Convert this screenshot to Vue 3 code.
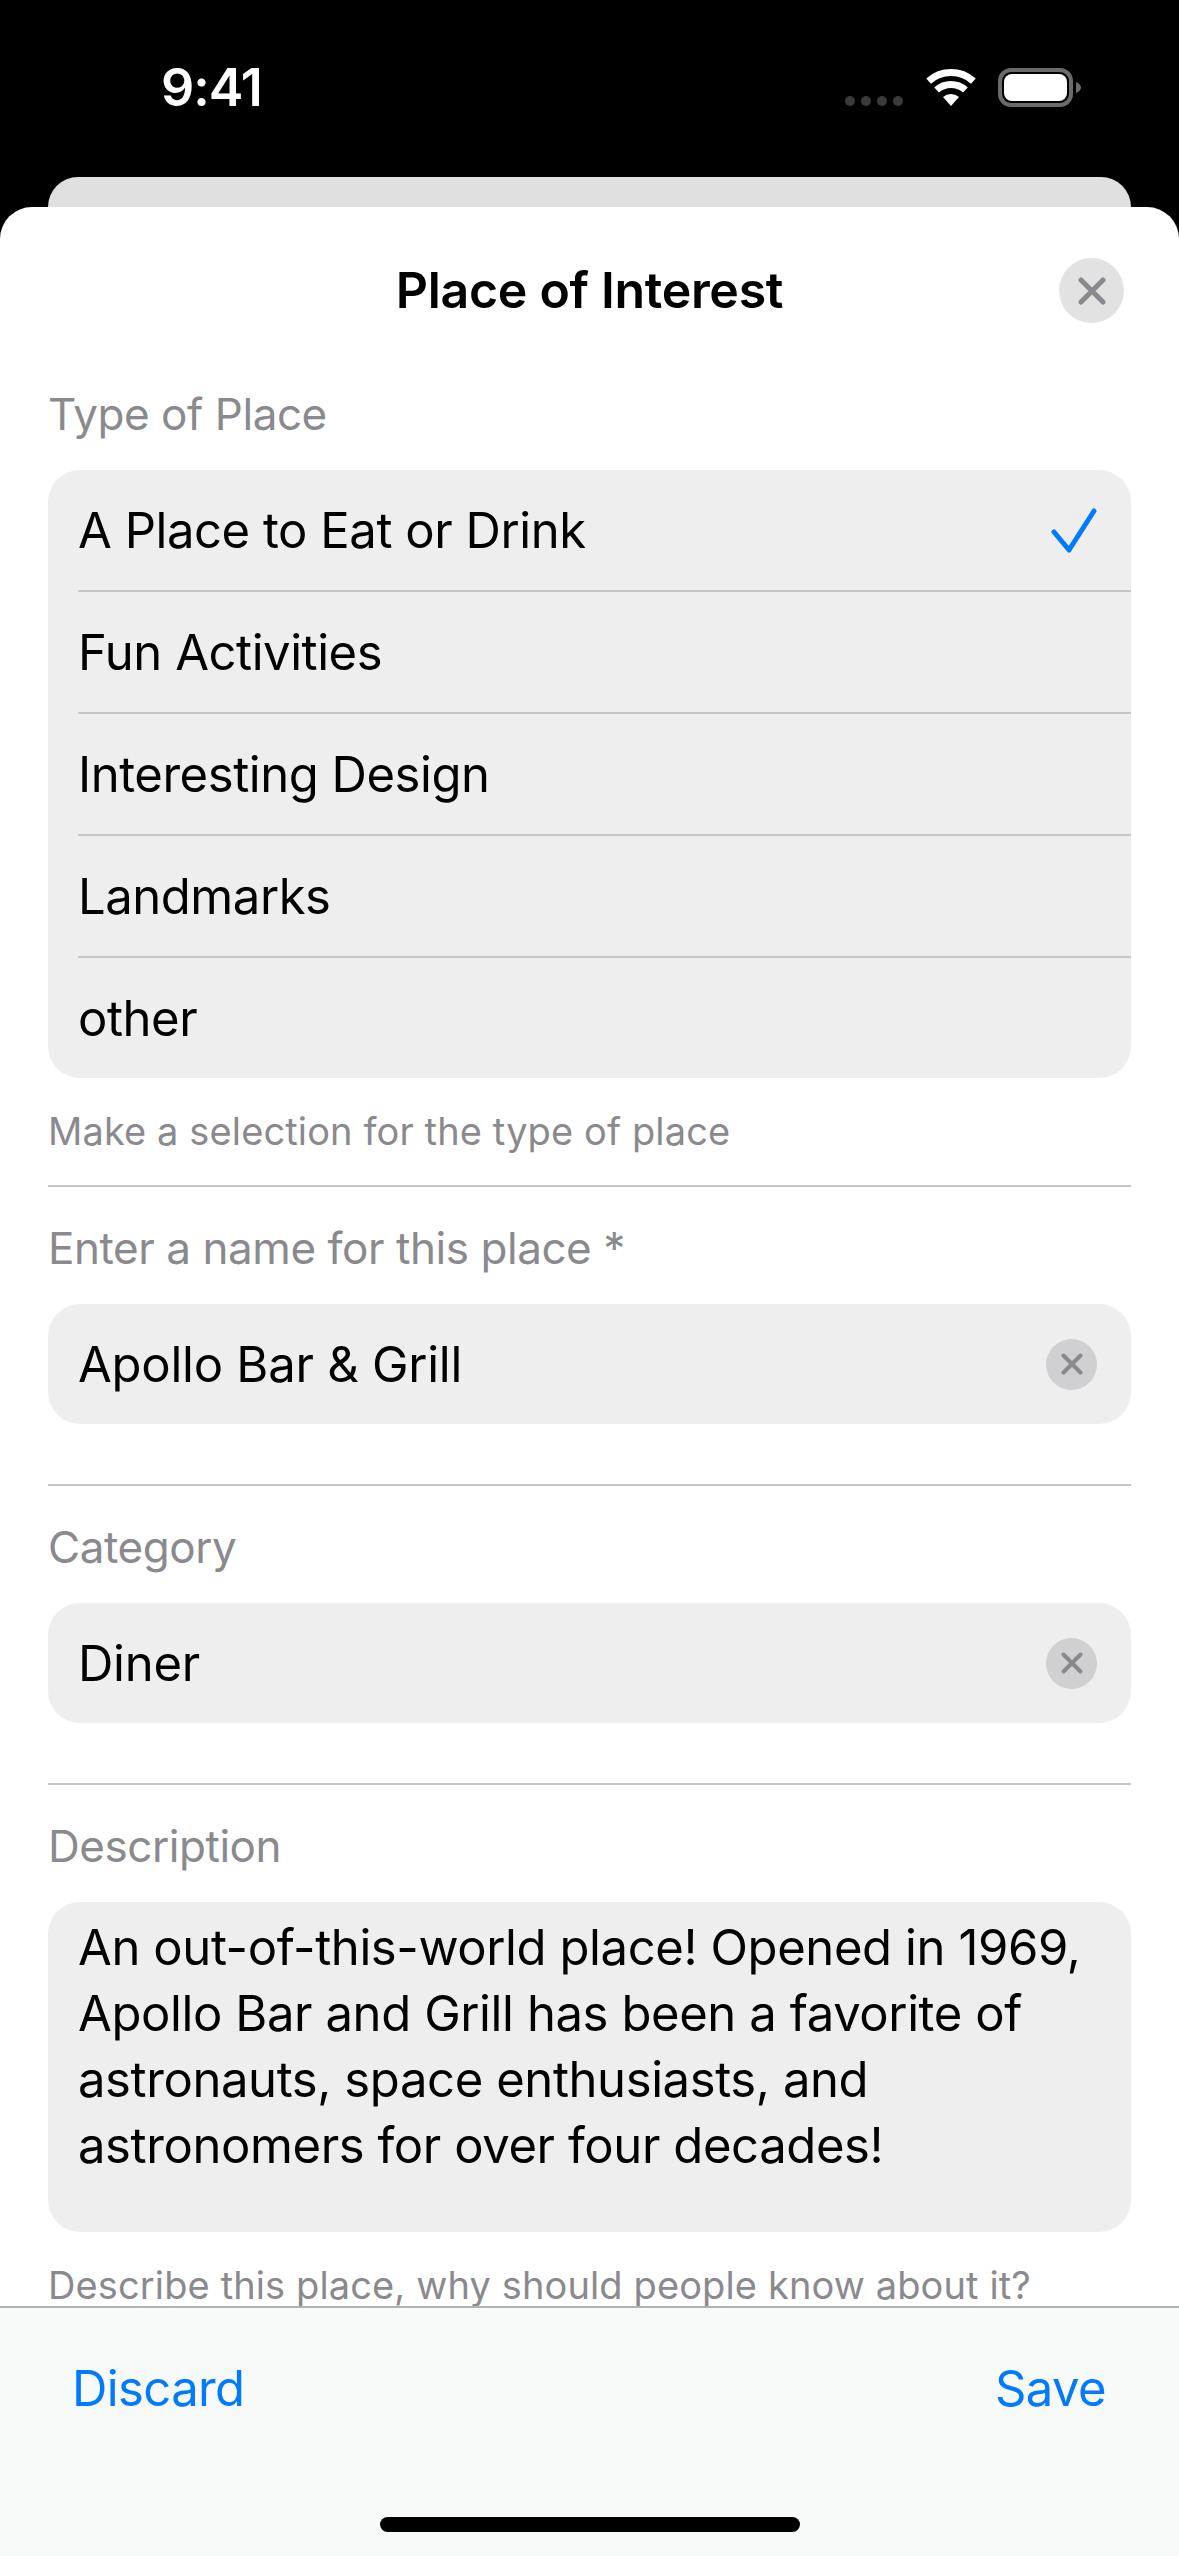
<script setup>
const placeTypes = [
  { id: 1, name: "A Place to Eat or Drink", selected: true },
  { id: 2, name: "Fun Activities" },
  { id: 3, name: "Interesting Design" },
  { id: 4, name: "Landmarks" },
  { id: 5, name: "other" },
];
</script>

<template>
  <div class="phone">
    <div class="status">
      <span class="time">9:41</span>
      <div class="status-icons">
        <div class="dots"><i></i><i></i><i></i><i></i></div>
        <svg class="wifi" width="50" height="37" viewBox="0 0 50 37">
          <path d="M2.6 12.1A33.5 33.5 0 0 1 47.4 12.1" fill="none" stroke="#fff" stroke-width="7" />
          <path d="M10.6 21A21.5 21.5 0 0 1 39.4 21" fill="none" stroke="#fff" stroke-width="7" />
          <path d="M25 37L17 28.1A12 12 0 0 1 33 28.1Z" fill="#fff" />
        </svg>
        <svg class="battery" width="83" height="39" viewBox="0 0 83 39">
          <rect x="2" y="2" width="71" height="35" rx="11" fill="none" stroke="#6b6b6b" stroke-width="4" />
          <rect x="6" y="6" width="63" height="27" rx="8" fill="#fff" />
          <path d="M78 14C81 15 83 17 83 19.5C83 22 81 24 78 25Z" fill="#6b6b6b" />
        </svg>
      </div>
    </div>
    <div class="peek"></div>

    <div class="sheet">
      <div class="header">
        <h1 class="title">Place of Interest</h1>
        <button class="close">
          <svg width="28" height="28" viewBox="0 0 28 28">
            <path d="M3 3L25 25M25 3L3 25" stroke="#8a8a8e" stroke-width="5" stroke-linecap="round" />
          </svg>
        </button>
      </div>

      <div class="content">
        <section class="section first">
          <div class="label">Type of Place</div>
          <div class="card">
            <div v-for="t in placeTypes" :key="t.id" class="row">
              <span>{{ t.name }}</span>
              <svg v-if="t.selected" class="check" width="46" height="48" viewBox="0 0 46 48">
                <path d="M3 26L18 44L43 5" fill="none" stroke="#007aff" stroke-width="5" stroke-linecap="round" stroke-linejoin="round" />
              </svg>
            </div>
          </div>
          <div class="hint">Make a selection for the type of place</div>
        </section>

        <section class="section">
          <div class="label">Enter a name for this place *</div>
          <div class="input">
            <span>Apollo Bar &amp; Grill</span>
            <button class="clear">
              <svg width="22" height="22" viewBox="0 0 22 22">
                <path d="M2.5 2.5L19.5 19.5M19.5 2.5L2.5 19.5" stroke="#89898d" stroke-width="4" stroke-linecap="round" />
              </svg>
            </button>
          </div>
        </section>

        <section class="section">
          <div class="label">Category</div>
          <div class="input">
            <span>Diner</span>
            <button class="clear">
              <svg width="22" height="22" viewBox="0 0 22 22">
                <path d="M2.5 2.5L19.5 19.5M19.5 2.5L2.5 19.5" stroke="#89898d" stroke-width="4" stroke-linecap="round" />
              </svg>
            </button>
          </div>
        </section>

        <section class="section">
          <div class="label">Description</div>
          <div class="textarea">
            An out-of-this-world place! Opened in 1969,<br />
            Apollo Bar and Grill has been a favorite of<br />
            astronauts, space enthusiasts, and<br />
            astronomers for over four decades!
          </div>
          <div class="hint">Describe this place, why should people know about it?</div>
        </section>
      </div>

      <div class="footer">
        <div class="actions">
          <span>Discard</span>
          <span>Save</span>
        </div>
        <div class="home"></div>
      </div>
    </div>
  </div>
</template>

<style>
html,
body {
  background: #000;
}
</style>

<style scoped>
.phone {
  width: 1179px;
  height: 2556px;
  background: #000;
  display: flex;
  flex-direction: column;
  overflow: hidden;
  font-family: Inter, "Liberation Sans", sans-serif;
  color: #000;
}
.status {
  height: 177px;
  flex: none;
  display: flex;
  justify-content: space-between;
  align-items: flex-start;
  padding: 0 98px 0 161px;
  box-sizing: border-box;
}
.time {
  color: #fff;
  font-size: 52px;
  font-weight: 600;
  line-height: 60px;
  margin-top: 58px;
  letter-spacing: -1px;
}
.status-icons {
  display: flex;
  align-items: flex-start;
  margin-top: 68px;
}
.dots {
  display: flex;
  gap: 6px;
  margin-top: 28px;
  margin-right: 23px;
}
.dots i {
  width: 10px;
  height: 10px;
  border-radius: 50%;
  background: #3a3a3a;
}
.wifi {
  margin-top: 1px;
  margin-right: 22px;
}
.peek {
  height: 30px;
  flex: none;
  margin: 0 48px;
  background: #e0e0e0;
  border-radius: 30px 30px 0 0;
}
.sheet {
  flex: 1;
  min-height: 0;
  background: #fff;
  border-radius: 32px 32px 0 0;
  display: flex;
  flex-direction: column;
}
.header {
  height: 166px;
  flex: none;
  display: flex;
  align-items: center;
  justify-content: center;
  position: relative;
}
.title {
  margin: 0;
  font-size: 50px;
  font-weight: 600;
  letter-spacing: -0.3px;
}
.close {
  position: absolute;
  right: 55px;
  top: 51px;
  width: 65px;
  height: 65px;
  border: none;
  border-radius: 50%;
  padding: 0;
  background: #e2e2e2;
  display: flex;
  align-items: center;
  justify-content: center;
}
.content {
  flex: 1;
  min-height: 0;
  overflow: hidden;
  padding: 0 48px;
}
.section {
  border-top: 2px solid #c6c6c8;
  padding-top: 34px;
}
.section.first {
  border-top: none;
  padding-top: 14px;
}
.label {
  font-size: 44px;
  line-height: 54px;
  color: #8a8a8e;
  margin-bottom: 29px;
  letter-spacing: -0.45px;
}
.card {
  background: #eeeeef;
  border-radius: 32px;
  padding-left: 30px;
}
.row {
  height: 120px;
  display: flex;
  align-items: center;
  justify-content: space-between;
  padding-right: 34px;
  border-bottom: 2px solid #c6c6c8;
  font-size: 49px;
  letter-spacing: -0.45px;
}
.row:last-child {
  border-bottom: none;
}
.hint {
  font-size: 38px;
  line-height: 48px;
  color: #8a8a8e;
  margin-top: 29px;
  margin-bottom: 30px;
  white-space: nowrap;
  letter-spacing: 0.12px;
}
.input {
  height: 120px;
  background: #eeeeef;
  border-radius: 32px;
  padding: 0 34px 0 30px;
  margin-bottom: 60px;
  display: flex;
  align-items: center;
  justify-content: space-between;
  font-size: 49px;
  letter-spacing: -0.25px;
}
.clear {
  width: 51px;
  height: 51px;
  border: none;
  border-radius: 50%;
  padding: 0;
  background: #d0d0d2;
  display: flex;
  align-items: center;
  justify-content: center;
}
.textarea {
  background: #eeeeef;
  border-radius: 32px;
  padding: 13px 30px 53px;
  font-size: 49px;
  line-height: 66px;
  letter-spacing: -0.4px;
  white-space: nowrap;
}
.footer {
  height: 250px;
  flex: none;
  box-sizing: border-box;
  background: #f8f9f9;
  border-top: 2px solid #b2b2b2;
  display: flex;
  flex-direction: column;
  align-items: center;
}
.actions {
  align-self: stretch;
  display: flex;
  justify-content: space-between;
  padding: 51px 73px 0 72px;
  font-size: 49px;
  line-height: 60px;
  color: #007aff;
  letter-spacing: -0.6px;
}
.home {
  width: 420px;
  height: 15px;
  border-radius: 8px;
  background: #000;
  margin-top: 98px;
}
</style>
